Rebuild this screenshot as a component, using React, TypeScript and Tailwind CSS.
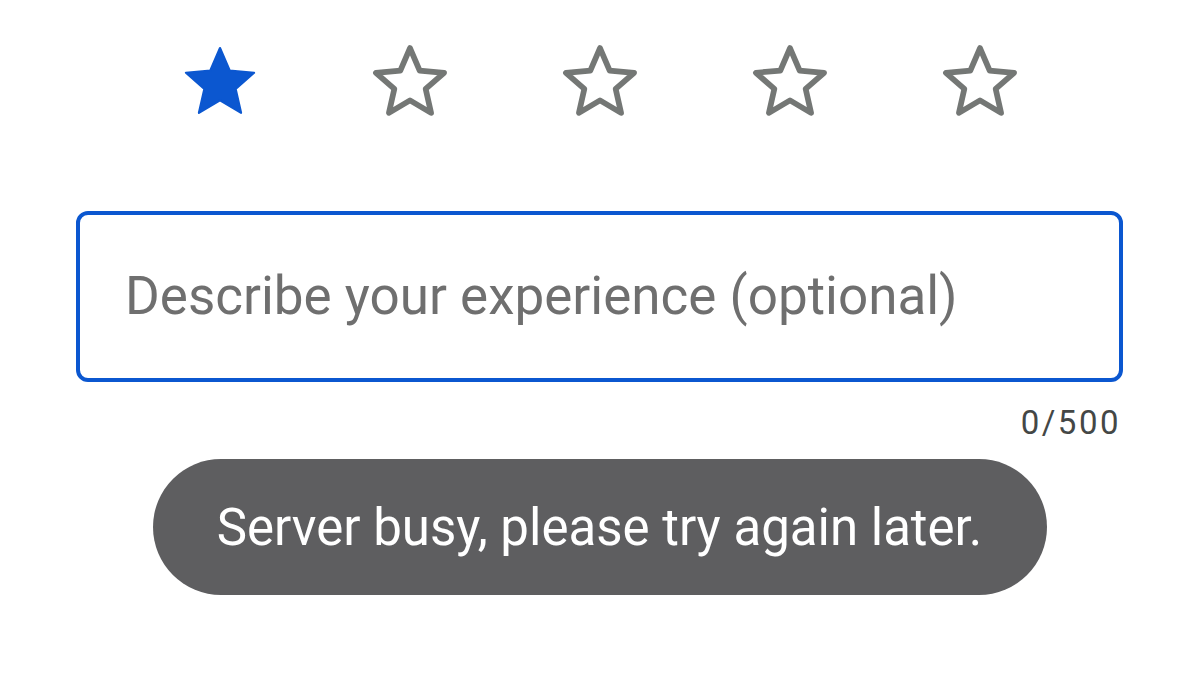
import React from 'react';

const StarIcon: React.FC<{ filled?: boolean }> = ({ filled }) => (
  <svg width="86" height="86" viewBox="0 0 24 24" fill="none">
    <polygon
      points="12,2.8 14.7,9.08 21.51,9.71 16.37,14.22 17.88,20.89 12,17.4 6.12,20.89 7.63,14.22 2.49,9.71 9.3,9.08"
      fill={filled ? '#0b57d0' : 'none'}
      stroke={filled ? '#0b57d0' : '#747775'}
      strokeWidth={filled ? 0.6 : 1.6}
      strokeLinejoin="round"
    />
  </svg>
);

export default function App() {
  return (
    <div className="w-[1199px] h-[673px] bg-white flex flex-col items-center font-['Roboto',sans-serif]">
      <div className="mt-[38px] flex gap-[104px]">
        <StarIcon filled />
        <StarIcon />
        <StarIcon />
        <StarIcon />
        <StarIcon />
      </div>

      <div className="mt-[87px] w-[1047px] h-[171px] border-4 border-[#0b57d0] rounded-[12px] flex items-center pl-[45px]">
        <span className="text-[53px] text-[#6f6f6f] leading-none">Describe your experience (optional)</span>
      </div>

      <div className="w-[1047px] text-right pr-[2px] mt-[24px] text-[33px] tracking-[2.5px] leading-none text-[#444746]">0/500</div>

      <div className="mt-[20px] w-[894px] h-[136px] rounded-full bg-[#5e5e60] flex items-center justify-center">
        <span className="text-[51px] text-white leading-none">Server busy, please try again later.</span>
      </div>
    </div>
  );
}
